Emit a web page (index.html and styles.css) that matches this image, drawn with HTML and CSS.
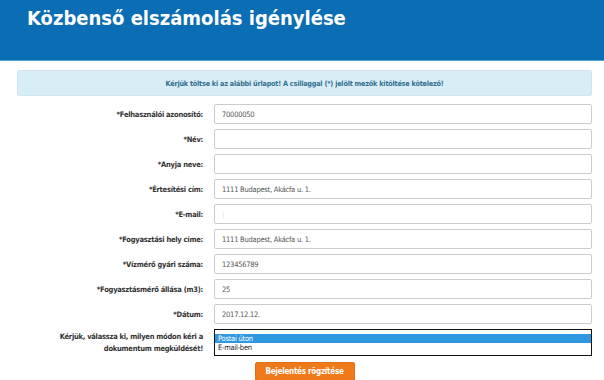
FILE: index.html
```html
<!DOCTYPE html>
<html lang="hu">
<head>
<meta charset="utf-8">
<title>Közbenső elszámolás igénylése</title>
<link rel="stylesheet" href="styles.css">
</head>
<body>
<header class="header">
  <h1 class="title">Közbenső elszámolás igénylése</h1>
</header>
<main class="content">
  <div class="alert">Kérjük töltse ki az alábbi űrlapot! A csillaggal (*) jelölt mezők kitöltése kötelező!</div>
  <form class="form">
    <label class="label">*Felhasználói azonosító:</label>
    <input class="field" type="text" value="70000050">
    <label class="label">*Név:</label>
    <input class="field" type="text" value="">
    <label class="label">*Anyja neve:</label>
    <input class="field" type="text" value="">
    <label class="label">*Értesítési cím:</label>
    <input class="field" type="text" value="1111 Budapest, Akácfa u. 1.">
    <label class="label">*E-mail:</label>
    <input class="field field-faint" type="text" value="|">
    <label class="label">*Fogyasztási hely címe:</label>
    <input class="field" type="text" value="1111 Budapest, Akácfa u. 1.">
    <label class="label">*Vízmérő gyári száma:</label>
    <input class="field" type="text" value="123456789">
    <label class="label">*Fogyasztásmérő állása (m3):</label>
    <input class="field" type="text" value="25">
    <label class="label">*Dátum:</label>
    <input class="field" type="text" value="2017.12.12.">
    <label class="label label-multi">Kérjük, válassza ki, milyen módon kéri a<br>dokumentum megküldését!</label>
    <div class="select">
      <div class="option option-selected">Postai úton</div>
      <div class="option">E-mail-ben</div>
    </div>
  </form>
  <div class="actions">
    <button class="button" type="button">Bejelentés rögzítése</button>
  </div>
</main>
</body>
</html>
```
FILE: styles.css
```css
* { box-sizing: border-box; }
html, body { margin: 0; padding: 0; background: #fff; }
body {
  font-family: "DejaVu Sans Condensed", "DejaVu Sans", sans-serif;
  color: #333;
  width: 604px;
  height: 380px;
  overflow: hidden;
}
.header {
  height: 61px;
  background: #0b6db3;
  border-bottom: 1px solid #5aa3d6;
  padding: 6px 0 0 27px;
}
.title {
  margin: 0;
  font-family: "DejaVu Sans Condensed", "DejaVu Sans", sans-serif;
  font-weight: bold;
  font-size: 20px;
  line-height: 25px;
  color: #fff;
}
.content {
  padding: 9px 12px 0 17px;
}
.alert {
  height: 26px;
  background: #d9edf7;
  border: 1px solid #cfe6f2;
  border-radius: 2px;
  color: #31708f;
  font-weight: bold;
  font-size: 7.2px;
  letter-spacing: -0.2px;
  display: flex;
  align-items: center;
  justify-content: center;
}
.form {
  margin-top: 8px;
  display: grid;
  grid-template-columns: 186px 1fr;
  column-gap: 11px;
  row-gap: 5px;
}
.label {
  font-weight: bold;
  font-size: 7.5px;
  letter-spacing: -0.25px;
  color: #333;
  text-align: right;
  align-self: center;
}
.label-multi {
  line-height: 12px;
}
.field {
  height: 20px;
  border: 1px solid #ccc;
  border-radius: 2px;
  padding: 0 7px;
  font-family: "DejaVu Sans Condensed", "DejaVu Sans", sans-serif;
  font-size: 7.5px;
  letter-spacing: -0.25px;
  color: #555;
  background: #fff;
  width: 100%;
  margin: 0;
}
.field-faint { color: #ddd; }
.select {
  height: 27px;
  border: 1px solid #111;
  padding: 4px 0 0 0;
  font-size: 7.5px;
  letter-spacing: -0.25px;
  background: #fff;
}
.option {
  height: 9px;
  line-height: 9px;
  padding-left: 3px;
  color: #222;
}
.option-selected {
  background: #2f97e0;
  color: #fff;
}
.actions {
  display: flex;
  justify-content: center;
  margin-top: 6px;
}
.button {
  width: 100px;
  height: 19px;
  background: #ef7a1b;
  border: 1px solid #e0701a;
  border-radius: 2px;
  color: #fff;
  font-family: "DejaVu Sans Condensed", "DejaVu Sans", sans-serif;
  font-weight: bold;
  font-size: 8px;
  letter-spacing: -0.25px;
  padding: 0;
}
```
